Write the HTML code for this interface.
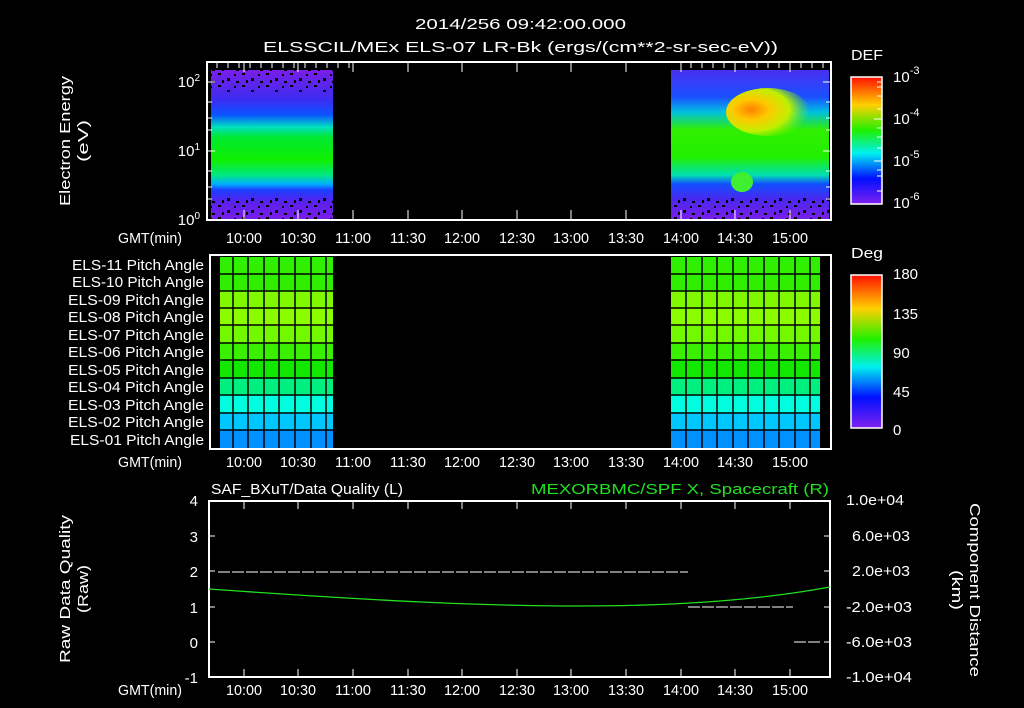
<!DOCTYPE html>
<html><head><meta charset="utf-8"><style>
html,body{margin:0;padding:0;background:#000;width:1024px;height:708px;overflow:hidden}
svg{display:block}
text{font-family:"Liberation Sans",sans-serif;fill:#fff;font-size:15px}
</style></head><body>
<svg width="1024" height="708" viewBox="0 0 1024 708" xmlns="http://www.w3.org/2000/svg">
<defs>
<linearGradient id="specL" x1="0" y1="0" x2="0" y2="1">
<stop offset="0" stop-color="#7a1ee8"/><stop offset="0.2" stop-color="#3a2cf0"/>
<stop offset="0.3" stop-color="#0a55ff"/><stop offset="0.38" stop-color="#00e0c0"/>
<stop offset="0.45" stop-color="#00e830"/><stop offset="0.6" stop-color="#10f000"/>
<stop offset="0.7" stop-color="#00e880"/><stop offset="0.76" stop-color="#00b0ff"/>
<stop offset="0.8" stop-color="#1a40ff"/><stop offset="0.88" stop-color="#5a20f0"/>
<stop offset="1" stop-color="#7a1ee8"/></linearGradient>
<linearGradient id="specR" x1="0" y1="0" x2="0" y2="1">
<stop offset="0" stop-color="#4a30f0"/><stop offset="0.18" stop-color="#1a50ff"/>
<stop offset="0.28" stop-color="#00c0e0"/><stop offset="0.4" stop-color="#30f000"/>
<stop offset="0.58" stop-color="#20f000"/><stop offset="0.7" stop-color="#00e0b0"/>
<stop offset="0.76" stop-color="#1050ff"/><stop offset="0.86" stop-color="#4a28f0"/>
<stop offset="1" stop-color="#7a1ee8"/></linearGradient>
<radialGradient id="blob" cx="0.3" cy="0.45" r="0.7">
<stop offset="0" stop-color="#ff8000"/><stop offset="0.3" stop-color="#ffc800"/>
<stop offset="0.65" stop-color="#c0f000"/><stop offset="1" stop-color="#60f000" stop-opacity="0"/></radialGradient>
<linearGradient id="cb1" x1="0" y1="0" x2="0" y2="1">
<stop offset="0" stop-color="#ff1000"/><stop offset="0.22" stop-color="#ffd000"/>
<stop offset="0.42" stop-color="#20f000"/><stop offset="0.6" stop-color="#00f0f0"/>
<stop offset="0.8" stop-color="#0010ff"/><stop offset="1" stop-color="#8020f0"/></linearGradient>
<pattern id="speck" width="24" height="12" patternUnits="userSpaceOnUse">
<rect x="2" y="1" width="3" height="2" fill="#000"/><rect x="11" y="6" width="3" height="3" fill="#000"/>
<rect x="18" y="2" width="2" height="2" fill="#000"/><rect x="6" y="8" width="2" height="3" fill="#000"/>
<rect x="20" y="9" width="3" height="2" fill="#000"/></pattern>
</defs>

<text x="415" y="29" font-size="16" textLength="211" lengthAdjust="spacingAndGlyphs">2014/256 09:42:00.000</text>
<text x="263" y="52" font-size="16" textLength="515" lengthAdjust="spacingAndGlyphs">ELSSCIL/MEx ELS-07 LR-Bk  (ergs/(cm**2-sr-sec-eV))</text>

<!-- Panel 1 -->
<rect x="211" y="70" width="122" height="150" fill="url(#specL)"/>
<rect x="211" y="70" width="122" height="22" fill="url(#speck)"/>
<rect x="211" y="196" width="122" height="24" fill="url(#speck)"/>
<rect x="671" y="70" width="158" height="150" fill="url(#specR)"/>
<ellipse cx="768" cy="112" rx="42" ry="24" fill="url(#blob)"/>
<ellipse cx="742" cy="182" rx="11" ry="10" fill="#40f030"/>
<rect x="671" y="198" width="158" height="22" fill="url(#speck)"/>
<rect x="207" y="62" width="624" height="158" fill="none" stroke="#fff" stroke-width="2"/>
<text x="200" y="87" text-anchor="end">10<tspan font-size="10" dy="-6">2</tspan></text>
<text x="200" y="156" text-anchor="end">10<tspan font-size="10" dy="-6">1</tspan></text>
<text x="200" y="225" text-anchor="end">10<tspan font-size="10" dy="-6">0</tspan></text>
<text transform="translate(70,206) rotate(-90)" textLength="130" lengthAdjust="spacingAndGlyphs">Electron Energy</text>
<text transform="translate(88,162) rotate(-90)" textLength="42" lengthAdjust="spacingAndGlyphs">(eV)</text>
<g id="tl1">
<text x="118" y="243" textLength="64" lengthAdjust="spacingAndGlyphs">GMT(min)</text>
<text x="226" y="243" textLength="36" lengthAdjust="spacingAndGlyphs">10:00</text><text x="280" y="243" textLength="36" lengthAdjust="spacingAndGlyphs">10:30</text><text x="335" y="243" textLength="36" lengthAdjust="spacingAndGlyphs">11:00</text><text x="390" y="243" textLength="36" lengthAdjust="spacingAndGlyphs">11:30</text><text x="444" y="243" textLength="36" lengthAdjust="spacingAndGlyphs">12:00</text><text x="499" y="243" textLength="36" lengthAdjust="spacingAndGlyphs">12:30</text><text x="553" y="243" textLength="36" lengthAdjust="spacingAndGlyphs">13:00</text><text x="608" y="243" textLength="36" lengthAdjust="spacingAndGlyphs">13:30</text><text x="663" y="243" textLength="36" lengthAdjust="spacingAndGlyphs">14:00</text><text x="717" y="243" textLength="36" lengthAdjust="spacingAndGlyphs">14:30</text><text x="772" y="243" textLength="36" lengthAdjust="spacingAndGlyphs">15:00</text></g>
<use href="#tl1" y="224"/>
<use href="#tl1" y="452"/>
<rect x="851" y="77" width="31" height="127" fill="url(#cb1)" stroke="#fff" stroke-width="1.5"/>
<g stroke="#fff"><path d="M882 82h-5M882 87h-5M882 96h-5M882 109h-5M882 119h-8M882 128h-5M882 137h-5M882 148h-5M882 161h-8M882 170h-5M882 176h-5M882 191h-5"/></g>
<text x="851" y="60" font-size="16" textLength="32" lengthAdjust="spacingAndGlyphs">DEF</text>
<g font-size="17"><text x="893" y="82">10<tspan font-size="11" dy="-8">-3</tspan></text><text x="893" y="124">10<tspan font-size="11" dy="-8">-4</tspan></text><text x="893" y="166">10<tspan font-size="11" dy="-8">-5</tspan></text><text x="893" y="208">10<tspan font-size="11" dy="-8">-6</tspan></text></g>

<!-- Panel 2 -->
<g id="blk">
<rect x="220" y="257" width="113" height="17" fill="#2ef000"/><rect x="220" y="274" width="113" height="17" fill="#30ee00"/>
<rect x="220" y="291" width="113" height="17" fill="#80f800"/><rect x="220" y="308" width="113" height="17" fill="#8cfc00"/>
<rect x="220" y="325" width="113" height="18" fill="#74f800"/><rect x="220" y="343" width="113" height="17" fill="#38f000"/>
<rect x="220" y="360" width="113" height="18" fill="#12e800"/><rect x="220" y="378" width="113" height="17" fill="#00f080"/>
<rect x="220" y="395" width="113" height="18" fill="#00fde0"/><rect x="220" y="413" width="113" height="17" fill="#00c8ff"/>
<rect x="220" y="430" width="113" height="18" fill="#0090ff"/>
</g>
<g>
<rect x="671" y="257" width="149" height="17" fill="#2ef000"/><rect x="671" y="274" width="149" height="17" fill="#30ee00"/>
<rect x="671" y="291" width="149" height="17" fill="#80f800"/><rect x="671" y="308" width="149" height="17" fill="#8cfc00"/>
<rect x="671" y="325" width="149" height="18" fill="#74f800"/><rect x="671" y="343" width="149" height="17" fill="#38f000"/>
<rect x="671" y="360" width="149" height="18" fill="#12e800"/><rect x="671" y="378" width="149" height="17" fill="#00f080"/>
<rect x="671" y="395" width="149" height="18" fill="#00fde0"/><rect x="671" y="413" width="149" height="17" fill="#00c8ff"/>
<rect x="671" y="430" width="149" height="18" fill="#0090ff"/>
</g>
<g stroke="#000" stroke-width="1.5">
<path d="M233 256V449M248 256V449M264 256V449M279 256V449M295 256V449M311 256V449M326 256V449"/>
<path d="M686 256V449M702 256V449M717 256V449M733 256V449M748 256V449M764 256V449M779 256V449M795 256V449M810 256V449"/>
<path d="M211 274H830M211 291H830M211 308H830M211 325H830M211 343H830M211 360H830M211 378H830M211 395H830M211 413H830M211 430H830"/>
</g>
<rect x="210" y="255" width="621" height="194" fill="none" stroke="#fff" stroke-width="2"/>
<g font-size="14">
<text x="72" y="270" textLength="132" lengthAdjust="spacingAndGlyphs">ELS-11 Pitch Angle</text><text x="72" y="287" textLength="132" lengthAdjust="spacingAndGlyphs">ELS-10 Pitch Angle</text><text x="68" y="305" textLength="136" lengthAdjust="spacingAndGlyphs">ELS-09 Pitch Angle</text><text x="68" y="322" textLength="136" lengthAdjust="spacingAndGlyphs">ELS-08 Pitch Angle</text><text x="68" y="340" textLength="136" lengthAdjust="spacingAndGlyphs">ELS-07 Pitch Angle</text><text x="68" y="357" textLength="136" lengthAdjust="spacingAndGlyphs">ELS-06 Pitch Angle</text><text x="68" y="375" textLength="136" lengthAdjust="spacingAndGlyphs">ELS-05 Pitch Angle</text><text x="68" y="392" textLength="136" lengthAdjust="spacingAndGlyphs">ELS-04 Pitch Angle</text><text x="68" y="410" textLength="136" lengthAdjust="spacingAndGlyphs">ELS-03 Pitch Angle</text><text x="68" y="427" textLength="136" lengthAdjust="spacingAndGlyphs">ELS-02 Pitch Angle</text><text x="70" y="445" textLength="134" lengthAdjust="spacingAndGlyphs">ELS-01 Pitch Angle</text></g>
<rect x="851" y="275" width="31" height="153" fill="url(#cb1)" stroke="#fff" stroke-width="1.5"/>
<text x="851" y="258" font-size="16" textLength="32" lengthAdjust="spacingAndGlyphs">Deg</text>
<g font-size="16"><text x="893" y="279">180</text><text x="893" y="319">135</text><text x="893" y="358">90</text><text x="893" y="397">45</text><text x="893" y="435">0</text></g>

<!-- Panel 3 -->
<text x="211" y="494" textLength="192" lengthAdjust="spacingAndGlyphs">SAF_BXuT/Data Quality (L)</text>
<text x="531" y="494" textLength="298" lengthAdjust="spacingAndGlyphs" style="fill:#20e020">MEXORBMC/SPF X, Spacecraft (R)</text>
<rect x="209" y="501" width="621" height="176" fill="none" stroke="#fff" stroke-width="2"/>
<path d="M218 572H688" stroke="#fff" stroke-dasharray="12 2"/>
<path d="M688 607H793" stroke="#fff" stroke-dasharray="12 2"/>
<path d="M794 642H820" stroke="#fff" stroke-dasharray="12 2"/>
<path d="M209 589 C380 601 480 606 580 606 C680 606 760 600 830 587" stroke="#20e020" fill="none" stroke-width="1.3"/>
<g text-anchor="end" font-size="16"><text x="198" y="506">4</text><text x="198" y="542">3</text><text x="198" y="577">2</text><text x="198" y="613">1</text><text x="198" y="648">0</text><text x="198" y="683">-1</text></g>
<g font-size="14"><text x="846" y="505" textLength="58" lengthAdjust="spacingAndGlyphs">1.0e+04</text><text x="852" y="541" textLength="58" lengthAdjust="spacingAndGlyphs">6.0e+03</text><text x="852" y="576" textLength="58" lengthAdjust="spacingAndGlyphs">2.0e+03</text><text x="846" y="612" textLength="66" lengthAdjust="spacingAndGlyphs">-2.0e+03</text><text x="846" y="647" textLength="66" lengthAdjust="spacingAndGlyphs">-6.0e+03</text><text x="846" y="682" textLength="66" lengthAdjust="spacingAndGlyphs">-1.0e+04</text></g>
<text transform="translate(70,663) rotate(-90)" textLength="148" lengthAdjust="spacingAndGlyphs">Raw Data Quality</text>
<text transform="translate(88,613) rotate(-90)" textLength="48" lengthAdjust="spacingAndGlyphs">(Raw)</text>
<text transform="translate(970,503) rotate(90)" textLength="174" lengthAdjust="spacingAndGlyphs">Component Distance</text>
<text transform="translate(952,570) rotate(90)" textLength="40" lengthAdjust="spacingAndGlyphs">(km)</text>

<!-- ticks -->
<g stroke="#fff" stroke-width="1">
<path d="M217 62v6M228 62v6M239 62v6M244 62v10M250 62v6M261 62v6M272 62v6M283 62v6M294 62v6M298 62v10M305 62v6M316 62v6M327 62v6M338 62v6M349 62v6M353 62v10M408 62v10M462 62v10M517 62v10M571 62v10M626 62v10M681 62v10M735 62v10M790 62v10M691 62v6M702 62v6M713 62v6M724 62v6M746 62v6M757 62v6M768 62v6M779 62v6M801 62v6M812 62v6M823 62v6"/>
<path d="M244 220v-10M298 220v-10M353 220v-10M408 220v-10M462 220v-10M517 220v-10M571 220v-10M626 220v-10M681 220v-10M735 220v-10M790 220v-10"/>
<path d="M207 82h8M207 130h5M207 118h5M207 102h5M207 151h8M207 199h5M207 187h5M207 171h5M831 82h-8M831 130h-5M831 118h-5M831 102h-5M831 151h-8M831 199h-5M831 187h-5M831 171h-5"/>
<path d="M244 501v8M298 501v8M353 501v8M408 501v8M462 501v8M517 501v8M571 501v8M626 501v8M681 501v8M735 501v8M790 501v8M244 677v-8M298 677v-8M353 677v-8M408 677v-8M462 677v-8M517 677v-8M571 677v-8M626 677v-8M681 677v-8M735 677v-8M790 677v-8"/>
<path d="M209 536h6M209 571h6M209 607h6M209 642h6M830 536h-6M830 571h-6M830 607h-6M830 642h-6"/>
</g>
</svg>
</body></html>
